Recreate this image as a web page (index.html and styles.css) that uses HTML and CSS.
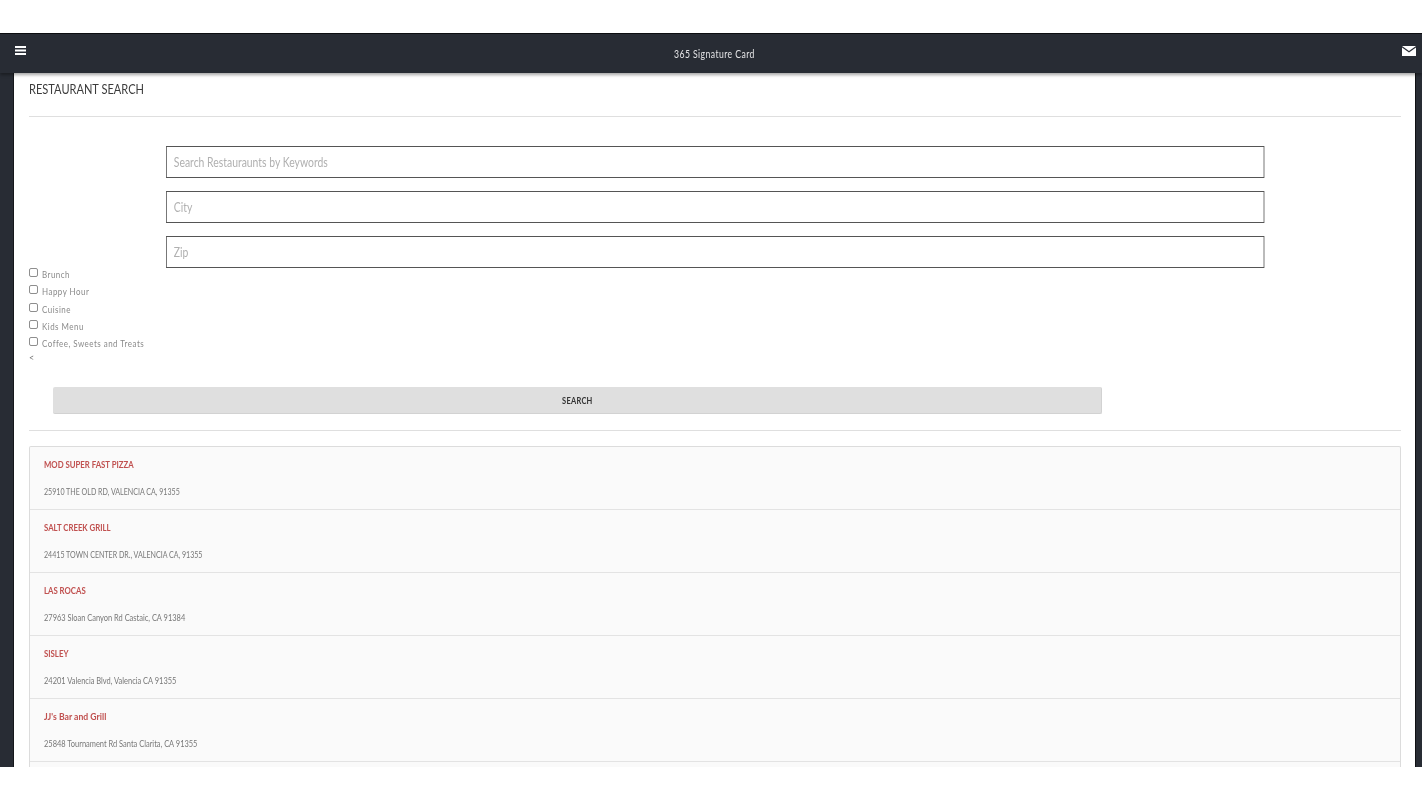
FILE: index.html
```html
<!DOCTYPE html>
<html lang="en">
<head>
<meta charset="utf-8">
<title>365 Signature Card</title>
<link rel="stylesheet" href="styles.css">
</head>
<body>
<div class="frame">
  <header class="topbar">
    <svg class="icon-menu" width="11" height="9" viewBox="0 0 11 9"><path d="M0 0h11v2H0zM0 3.5h11v2H0zM0 7h11v2H0z" fill="#fff"/></svg>
    <span class="brand">365 Signature Card</span>
    <svg class="icon-mail" width="14" height="10" viewBox="0 0 14 10"><path d="M0 0h14L7 5zM0 1.6V10h14V1.6L7 6.6z" fill="#fff"/></svg>
  </header>
  <main class="page">
    <h1 class="title">RESTAURANT SEARCH</h1>
    <hr class="rule rule-top">
    <div class="fields">
      <input class="field" placeholder="Search Restauraunts by Keywords">
      <input class="field" placeholder="City">
      <input class="field" placeholder="Zip">
    </div>
    <div class="checks">
      <label class="check"><input type="checkbox"><span>Brunch</span></label>
      <label class="check"><input type="checkbox"><span>Happy Hour</span></label>
      <label class="check"><input type="checkbox"><span>Cuisine</span></label>
      <label class="check"><input type="checkbox"><span>Kids Menu</span></label>
      <label class="check"><input type="checkbox"><span>Coffee, Sweets and Treats</span></label>
    </div>
    <div class="caret">&lt;</div>
    <button class="search"><span class="search-label">SEARCH</span></button>
    <hr class="rule rule-mid">
    <ul class="list">
      <li class="row"><a class="name">MOD SUPER FAST PIZZA</a><p class="addr addr-upper">25910 THE OLD RD, VALENCIA CA, 91355</p></li>
      <li class="row"><a class="name">SALT CREEK GRILL</a><p class="addr addr-upper">24415 TOWN CENTER DR., VALENCIA CA, 91355</p></li>
      <li class="row"><a class="name">LAS ROCAS</a><p class="addr">27963 Sloan Canyon Rd Castaic, CA 91384</p></li>
      <li class="row"><a class="name">SISLEY</a><p class="addr">24201 Valencia Blvd, Valencia CA 91355</p></li>
      <li class="row"><a class="name name-mixed">JJ's Bar and Grill</a><p class="addr">25848 Tournament Rd Santa Clarita, CA 91355</p></li>
      <li class="row"></li>
    </ul>
  </main>
</div>
</body>
</html>
```
FILE: styles.css
```css
* { box-sizing: border-box; }
html, body { margin: 0; padding: 0; background: #fff; height: 800px; overflow: hidden; }
body { font-family: "Lato", "Liberation Sans", sans-serif; padding-top: 33px; }
.frame {
  height: 734px;
  overflow: hidden;
  background: #282c34;
  border-top: 1px solid #0c0d10;
  display: flex;
  flex-direction: column;
  filter: blur(.3px);
}
.topbar {
  height: 39px;
  flex: none;
  display: flex;
  align-items: flex-start;
  justify-content: space-between;
  padding: 12px 0 0 15px;
  position: relative;
  background: #282c34;
  box-shadow: 0 2px 3px rgba(0, 0, 0, .35);
  z-index: 1;
}
.icon-mail { margin: 0 6px 0 0; }
.brand {
  position: absolute;
  left: 674px;
  top: 13px;
  color: #e4e4e6;
  font-size: 11px;
  line-height: 13px;
  letter-spacing: .55px;
  transform: scaleX(.786);
  transform-origin: left;
}
.page {
  flex: 1;
  margin: 0 6px 0 14px;
  padding: 7px 14px 0 15px;
  background: #fff;
  border-right: 1px solid #0f1013;
  box-shadow: -1px 0 0 #15171b;
}
.title {
  margin: 0;
  font-size: 14px;
  line-height: 18px;
  font-weight: 400;
  color: #3c3c3c;
  transform: scaleX(.79);
  transform-origin: left;
}
.rule { border: 0; height: 1px; margin: 0; background: #dfdfdf; }
.rule-top { margin-top: 18px; }
.fields {
  display: flex;
  flex-direction: column;
  align-items: flex-start;
  gap: 13px;
  padding: 29px 0 0 137px;
}
.field {
  height: 32px;
  width: 1372.5px;
  flex: none;
  border: 1px solid #555;
  padding: 0 8.75px;
  font: 13px "Lato", "Liberation Sans", sans-serif;
  background: #fff;
  transform: scaleX(.8);
  transform-origin: left;
}
.field::placeholder { color: #b0b0b0; opacity: 1; }
.checks { display: flex; flex-direction: column; }
.check {
  height: 17.3px;
  display: flex;
  align-items: flex-start;
  color: #8a8a8a;
  font-size: 10px;
  letter-spacing: .6px;
}
.check input {
  width: 9px;
  height: 9px;
  margin: 0 4px 0 0;
  appearance: none;
  border: 1px solid #8e8e8e;
  border-radius: 2px;
  background: #fff;
  flex: none;
}
.check span {
  line-height: 12px;
  white-space: nowrap;
  transform: scaleX(.797);
  transform-origin: left;
}
.caret { font-size: 9px; line-height: 10px; color: #777; margin-top: -1px; }
.search {
  display: block;
  margin: 24px 0 0 24px;
  width: 1049px;
  height: 27px;
  border: 0;
  border-bottom: 1px solid #d2d2d2;
  border-right: 1px solid #d2d2d2;
  border-radius: 2px;
  background: #dfdfdf;
  color: #333;
  font: 700 9px "Lato", "Liberation Sans", sans-serif;
  letter-spacing: .3px;
}
.search-label { display: inline-block; transform: scaleX(.83); }
.rule-mid { margin-top: 16px; }
.list {
  list-style: none;
  margin: 15px 0 0;
  padding: 0;
  border: 1px solid #dcdcdc;
  border-bottom: 0;
  border-radius: 2px 2px 0 0;
  background: #fafafa;
}
.row {
  height: 63px;
  padding: 13px 14px 0;
  border-bottom: 1px solid #e3e3e3;
}
.name {
  display: block;
  font-size: 9.5px;
  line-height: 10px;
  font-weight: 700;
  color: #c0504f;
  transform: scaleX(.82);
  transform-origin: left;
}
.name-mixed { transform: scaleX(.91); }
.addr {
  margin: 17px 0 0;
  font-size: 9.5px;
  line-height: 10px;
  color: #777;
  transform: scaleX(.785);
  transform-origin: left;
}
.addr-upper { transform: scaleX(.745); }
```
